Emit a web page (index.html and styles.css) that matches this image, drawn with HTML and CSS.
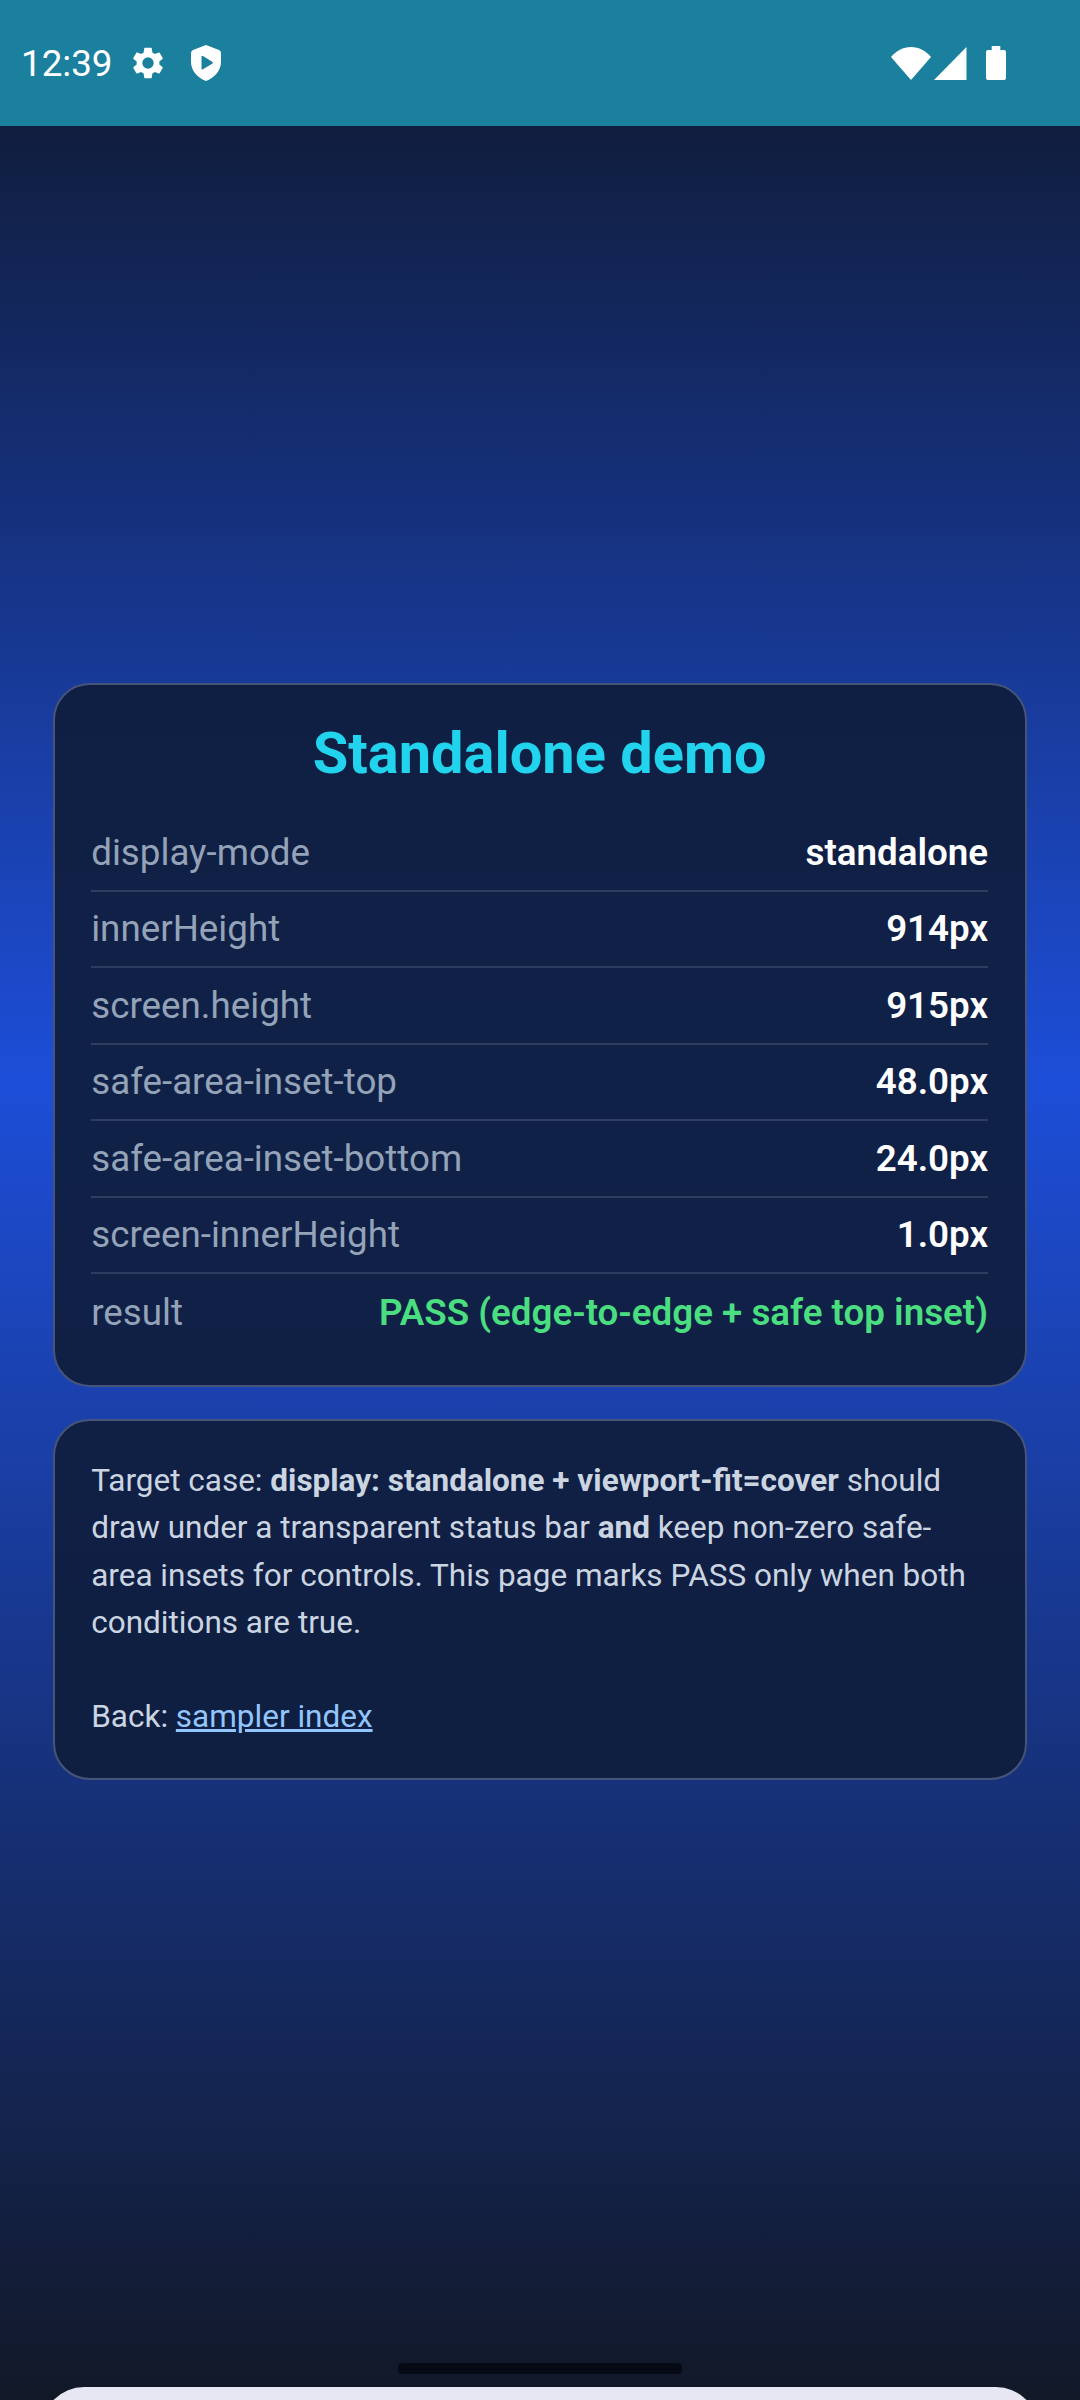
FILE: index.html
```html
<!DOCTYPE html>
<html lang="en">
<head>
  <meta charset="UTF-8">
  <meta name="viewport" content="width=device-width, initial-scale=1.0">
  <title>Standalone demo</title>
  <link rel="stylesheet" href="styles.css">
</head>
<body>
  <div class="status-bar">
    <div class="status-left">
      <span class="clock">12:39</span>
      <svg class="icon-gear" viewBox="0 0 24 24"><path d="M19.14 12.94c.04-.3.06-.61.06-.94s-.02-.64-.07-.94l2.03-1.58a.49.49 0 0 0 .12-.61l-1.92-3.32a.49.49 0 0 0-.59-.22l-2.39.96a7 7 0 0 0-1.62-.94l-.36-2.54a.48.48 0 0 0-.48-.41h-3.84a.48.48 0 0 0-.47.41l-.36 2.54a7.4 7.4 0 0 0-1.62.94l-2.39-.96a.48.48 0 0 0-.59.22L2.74 8.87a.48.48 0 0 0 .12.61l2.03 1.58c-.05.3-.09.63-.09.94s.02.64.07.94l-2.03 1.58a.49.49 0 0 0-.12.61l1.92 3.32c.12.22.37.29.59.22l2.39-.96c.5.38 1.03.7 1.62.94l.36 2.54c.05.24.24.41.48.41h3.84c.24 0 .44-.17.47-.41l.36-2.54a7 7 0 0 0 1.62-.94l2.39.96c.22.08.47 0 .59-.22l1.92-3.32a.48.48 0 0 0-.12-.61zM12 15.6A3.6 3.6 0 1 1 12 8.4a3.6 3.6 0 0 1 0 7.2z"/></svg>
      <svg class="icon-shield" viewBox="0 0 30 36"><path fill-rule="evenodd" d="M15 0L28 5Q30 5.800 30 8V17C30 26 23 33 15 36C7 33 0 26 0 17V8Q0 5.800 2 5ZM10.500 12V23.500Q10.500 25 12 24.200L21.500 18.500Q22.500 17.700 21.500 17L12 11Q10.500 10.400 10.500 12Z"/></svg>
    </div>
    <div class="status-right">
      <svg class="icon-wifi" viewBox="0 0 40 33"><path d="M0 10C5 4 12 0 20 0S35 4 40 10L20 33z"/></svg>
      <svg class="icon-signal" viewBox="0 0 33 33"><path d="M32.500 0V33H0z"/></svg>
      <svg class="icon-battery" viewBox="0 0 20 34"><path d="M5.700 0H14.300V4H18A2 2 0 0 1 20 6V32A2 2 0 0 1 18 34H2A2 2 0 0 1 0 32V6A2 2 0 0 1 2 4H5.700z"/></svg>
    </div>
  </div>

  <main class="page">
    <section class="card">
      <h1>Standalone demo</h1>
      <div class="row"><span class="label">display-mode</span><span class="value">standalone</span></div>
      <div class="row"><span class="label">innerHeight</span><span class="value">914px</span></div>
      <div class="row"><span class="label">screen.height</span><span class="value">915px</span></div>
      <div class="row"><span class="label">safe-area-inset-top</span><span class="value">48.0px</span></div>
      <div class="row"><span class="label">safe-area-inset-bottom</span><span class="value">24.0px</span></div>
      <div class="row"><span class="label">screen-innerHeight</span><span class="value">1.0px</span></div>
      <div class="row"><span class="label">result</span><span class="value pass">PASS (edge-to-edge + safe top inset)</span></div>
    </section>

    <section class="card note">
      <p>Target case: <strong>display: standalone + viewport-fit=cover</strong> should draw under a transparent status bar <strong>and</strong> keep non-zero safe-area insets for controls. This page marks PASS only when both conditions are true.</p>
      <p>Back: <a href="#">sampler index</a></p>
    </section>
  </main>

  <div class="home-bar"></div>
  <div class="bottom-sheet"></div>
</body>
</html>
```

FILE: styles.css
```css
* {
  box-sizing: border-box;
}

html, body {
  margin: 0;
  padding: 0;
}

body {
  position: relative;
  width: 1080px;
  height: 2400px;
  overflow: hidden;
  font-family: Roboto, sans-serif;
  background: linear-gradient(180deg, #0f172a 0%, #1d4ed8 45%, #111827 100%);
  color: #e2e8f0;
}

/* Status bar */
.status-bar {
  display: flex;
  justify-content: space-between;
  align-items: center;
  height: 126px;
  padding: 0 74px 0 21px;
  background-color: #1a809e;
  color: #fff;
}

.status-left, .status-right {
  display: flex;
  align-items: center;
}

.status-bar svg {
  display: block;
  fill: #fff;
}

.clock {
  font-size: 36.75px;
}

.icon-gear {
  width: 38px;
  height: 38px;
  margin-left: 16px;
}

.icon-shield {
  width: 30px;
  height: 36px;
  margin-left: 24px;
}

.icon-wifi {
  width: 40px;
  height: 33px;
}

.icon-signal {
  width: 33px;
  height: 33px;
  margin-left: 3px;
}

.icon-battery {
  width: 20px;
  height: 34px;
  margin-left: 19px;
}

/* Cards */
.page {
  display: flex;
  flex-direction: column;
  gap: 32px;
  padding: 557px 53px 0;
}

.card {
  padding: 35px 36.9px 34.5px 36.2px;
  background-color: rgba(15, 29, 60, 0.92);
  border: 2.6px solid #46547a;
  border-radius: 36.75px;
}

h1 {
  margin: 0 0 28px;
  font-size: 57.75px;
  font-weight: 700;
  line-height: 67px;
  text-align: center;
  color: #22d3ee;
}

.row {
  display: flex;
  justify-content: space-between;
  align-items: center;
  height: 76.5px;
  font-size: 36.75px;
  border-bottom: 2px solid #2e3c62;
}

.row:last-child {
  border-bottom: none;
}

.label {
  color: #94a3b8;
}

.value {
  font-weight: 600;
  color: #fff;
}

.value.pass {
  color: #4ade80;
}

/* Note card */
.note {
  padding-top: 36px;
  padding-bottom: 37px;
  font-size: 31.5px;
  line-height: 47.25px;
  color: #cbd5e1;
}

.note p {
  margin: 0 0 47.25px;
}

.note p:last-child {
  margin-bottom: 0;
}

.note a {
  color: #93c5fd;
}

/* Gesture bar and sheet peeking from below */
.home-bar {
  position: absolute;
  left: 398px;
  top: 2363px;
  width: 284px;
  height: 11px;
  border-radius: 4px;
  background-color: #050a14;
}

.bottom-sheet {
  position: absolute;
  left: 42px;
  top: 2387px;
  width: 996px;
  height: 60px;
  border-radius: 42px 42px 0 0;
  background-color: #e6e7f2;
}
```
